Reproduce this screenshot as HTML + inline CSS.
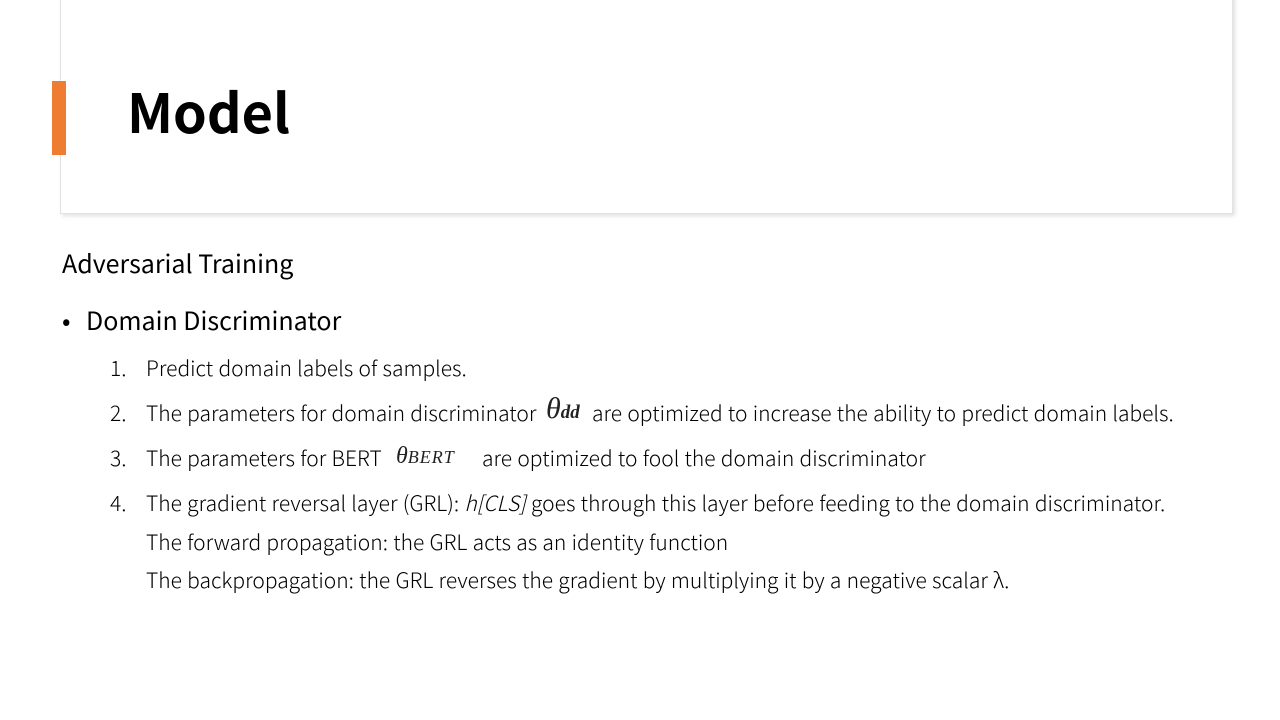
<!DOCTYPE html>
<html><head><meta charset="utf-8"><style>
body{margin:0;width:1280px;height:720px;background:#fff;position:relative;overflow:hidden;font-family:"Noto Sans CJK KR","Liberation Sans",sans-serif;color:#000}
.card{position:absolute;left:60px;top:-10px;width:1171px;height:222px;background:#fff;border:1px solid #e2e2e2;box-shadow:2px 2px 4px rgba(0,0,0,0.12)}
.bar{position:absolute;left:52px;top:81px;width:14px;height:74px;background:#ee7d31}
.t{position:absolute;white-space:nowrap;line-height:1}
.h{left:127px;top:83px;font-size:54px;font-weight:700}
.s{font-size:25px;font-weight:400}
.l{font-size:21px;font-weight:300;word-spacing:0.6px}
.m{font-family:"Liberation Serif",serif;font-style:italic;color:#222}
</style></head><body>
<div class="card"></div><div class="bar"></div>
<div class="t h">Model</div>
<div class="t s" style="left:62px;top:251px">Adversarial Training</div>
<div class="t s" style="left:62px;top:308px">•</div>
<div class="t s" style="left:86px;top:308px">Domain Discriminator</div>
<div class="t l" style="left:110px;top:358px">1.</div>
<div class="t l" style="left:146px;top:358px">Predict domain labels of samples.</div>
<div class="t l" style="left:110px;top:403px">2.</div>
<div class="t l" style="left:146px;top:403px">The parameters for domain discriminator</div>
<div class="t m" style="left:546px;top:394px;font-size:30px">θ<span style="font-size:19px;font-weight:bold">dd</span></div>
<div class="t l" style="left:592px;top:403px">are optimized to increase the ability to predict domain labels.</div>
<div class="t l" style="left:110px;top:448px">3.</div>
<div class="t l" style="left:146px;top:448px">The parameters for BERT</div>
<div class="t m" style="left:396px;top:444px;font-size:24px">θ<span style="font-size:18px;letter-spacing:1px">BERT</span></div>
<div class="t l" style="left:482px;top:448px">are optimized to fool the domain discriminator</div>
<div class="t l" style="left:110px;top:493px">4.</div>
<div class="t l" style="left:146px;top:493px">The gradient reversal layer (GRL): <i>h[CLS]</i> goes through this layer before feeding to the domain discriminator.</div>
<div class="t l" style="left:146px;top:532px">The forward propagation: the GRL acts as an identity function</div>
<div class="t l" style="left:146px;top:570px">The backpropagation: the GRL reverses the gradient by multiplying it by a negative scalar λ.</div>
</body></html>
